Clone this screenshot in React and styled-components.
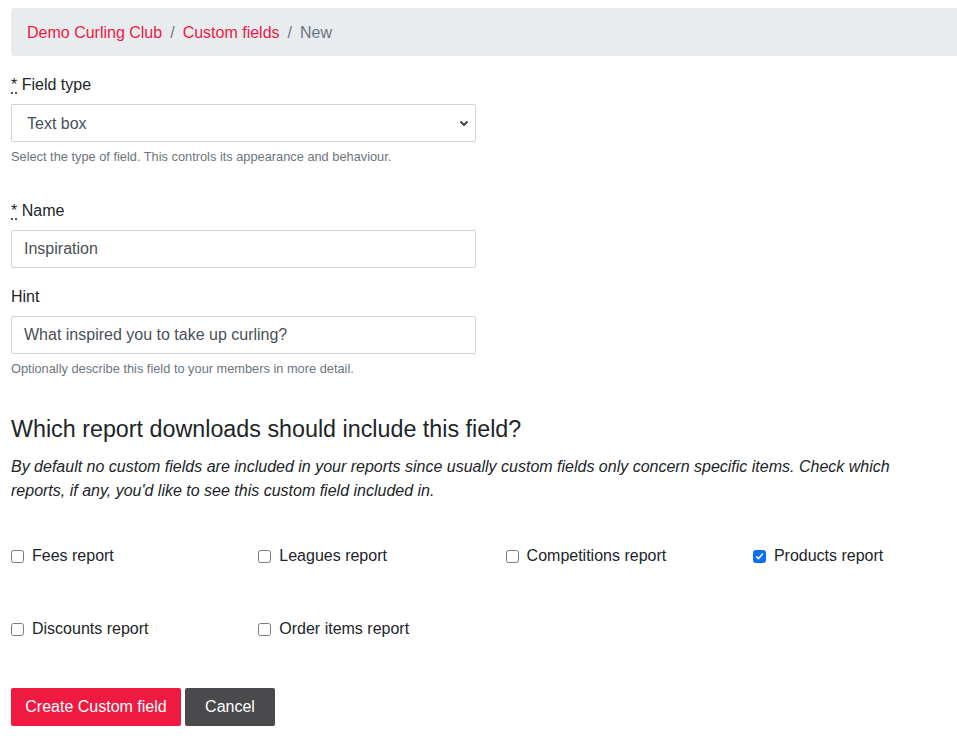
import React from "react";
import styled, { createGlobalStyle } from "styled-components";

const Global = createGlobalStyle`
  html, body { margin: 0; padding: 0; background: #fff; overflow: hidden; }
  body {
    font-family: "Liberation Sans", Arial, sans-serif;
    font-size: 16px;
    line-height: 1.5;
    color: #212529;
  }
  * { box-sizing: border-box; }
`;

const Page = styled.div`
  padding: 8px 0 0 11px;
  width: 1010px;
`;

const Breadcrumb = styled.nav`
  display: flex;
  align-items: center;
  height: 48px;
  padding: 2px 16px 0;
  background: #e9ecef;
  border-radius: 3px;
  margin-bottom: 16px;
`;

const Crumb = styled.a`
  color: #ee1944;
  text-decoration: none;
`;

const Current = styled.span`
  color: #6c757d;
`;

const Sep = styled.span`
  color: #6c757d;
  padding: 0 8px;
`;

const Group = styled.div`
  width: 465px;
  margin-bottom: ${(p) => p.$mb ?? 16}px;
`;

const Label = styled.label`
  display: block;
  padding-top: 1px;
  margin-bottom: 7px;
  line-height: 24px;
`;

const Req = styled.abbr`
  text-decoration: underline dotted;
  text-underline-offset: 3px;
  cursor: help;
`;

const inputBase = `
  display: block;
  width: 100%;
  height: 38px;
  border: 1px solid #ced4da;
  border-radius: 2px;
  font-family: "Liberation Sans", Arial, sans-serif;
  font-size: 16px;
  color: #495057;
  background-color: #fff;
  outline: none;
`;

const Select = styled.select`
  ${inputBase}
  appearance: none;
  padding: 0 32px 0 15px;
  background-image: url("data:image/svg+xml;utf8,<svg xmlns='http://www.w3.org/2000/svg' width='10' height='8' viewBox='0 0 10 8'><path d='M1.5 2.5 L5 6 L8.5 2.5' fill='none' stroke='%23343a40' stroke-width='1.8'/></svg>");
  background-repeat: no-repeat;
  background-position: right 6px center;
`;

const Input = styled.input`
  ${inputBase}
  padding: 0 12px;
`;

const Help = styled.small`
  display: block;
  margin-top: 5px;
  font-size: 12.8px;
  line-height: 19px;
  color: #6c757d;
`;

const Heading = styled.h4`
  margin: 37px 0 12px;
  font-size: 23.3px;
  font-weight: 400;
  line-height: 28px;
  color: #212529;
`;

const Lead = styled.p`
  margin: 0;
  font-style: italic;
  font-size: 16px;
  line-height: 24px;
  width: 920px;
`;

const Checks = styled.div`
  display: grid;
  grid-template-columns: repeat(4, 247.3px);
  row-gap: 49px;
  padding-top: 41px;
  margin-bottom: 47px;
`;

const CheckItem = styled.label`
  display: flex;
  align-items: center;
  line-height: 24px;
  gap: 8px;
`;

const Box = styled.input`
  appearance: none;
  margin: 0;
  width: 13px;
  height: 13px;
  border: 1px solid #7a7a7a;
  border-radius: 2.5px;
  background: #fff;
  flex: none;
  &:checked {
    border-color: #0b6ef5;
    background: #0b6ef5 url("data:image/svg+xml;utf8,<svg xmlns='http://www.w3.org/2000/svg' width='13' height='13' viewBox='0 0 13 13'><path d='M3 6.8 L5.3 9.2 L10 3.6' fill='none' stroke='white' stroke-width='1.8' stroke-linecap='round' stroke-linejoin='round'/></svg>") no-repeat center / 11px 11px;
  }
`;

const Actions = styled.div`
  display: flex;
  gap: 4px;
`;

const Button = styled.button`
  height: 38px;
  padding: 0 13px;
  border: none;
  border-radius: 2px;
  font-family: "Liberation Sans", Arial, sans-serif;
  font-size: 16px;
  color: #fff;
  background: ${(p) => (p.$variant === "secondary" ? "#4a4a4c" : "#ef1942")};
  min-width: ${(p) => p.$w || 0}px;
`;

const reports = [
  ["Fees report", false],
  ["Leagues report", false],
  ["Competitions report", false],
  ["Products report", true],
  ["Discounts report", false],
  ["Order items report", false],
];

export default function App() {
  return (
    <>
      <Global />
      <Page>
        <Breadcrumb>
          <Crumb href="#">Demo Curling Club</Crumb>
          <Sep>/</Sep>
          <Crumb href="#">Custom fields</Crumb>
          <Sep>/</Sep>
          <Current>New</Current>
        </Breadcrumb>

        <Group $mb={32}>
          <Label>
            <Req title="required">*</Req> Field type
          </Label>
          <Select defaultValue="text">
            <option value="text">Text box</option>
          </Select>
          <Help>Select the type of field. This controls its appearance and behaviour.</Help>
        </Group>

        <Group>
          <Label>
            <Req title="required">*</Req> Name
          </Label>
          <Input defaultValue="Inspiration" />
        </Group>

        <Group $mb={0}>
          <Label>Hint</Label>
          <Input defaultValue="What inspired you to take up curling?" />
          <Help>Optionally describe this field to your members in more detail.</Help>
        </Group>

        <Heading>Which report downloads should include this field?</Heading>
        <Lead>
          By default no custom fields are included in your reports since usually custom fields only
          concern specific items. Check which reports, if any, you'd like to see this custom field
          included in.
        </Lead>

        <Checks>
          {reports.map(([name, checked]) => (
            <CheckItem key={name}>
              <Box type="checkbox" defaultChecked={checked} />
              {name}
            </CheckItem>
          ))}
        </Checks>

        <Actions>
          <Button $w={170}>Create Custom field</Button>
          <Button $variant="secondary" $w={90}>Cancel</Button>
        </Actions>
      </Page>
    </>
  );
}
